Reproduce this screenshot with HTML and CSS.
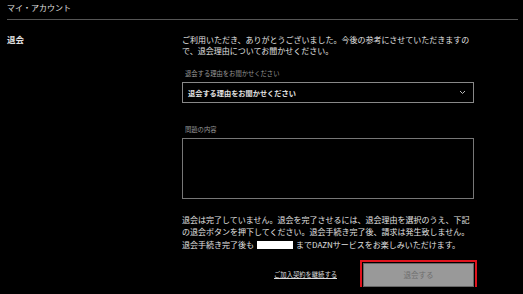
FILE: index.html
```html
<!DOCTYPE html>
<html lang="ja">
<head>
  <meta charset="UTF-8">
  <meta name="viewport" content="width=device-width, initial-scale=1.0">
  <title>マイ・アカウント</title>
  <link rel="stylesheet" href="styles.css">
</head>
<body>
  <!-- ヘッダー -->
  <div class="page-title">マイ・アカウント</div>

  <!-- 退会フォーム -->
  <div class="section">
    <div class="section-label">退会</div>
    <div class="section-body">
      <p class="intro">ご利用いただき、ありがとうございました。今後の参考にさせていただきますので、退会理由についてお聞かせください。</p>

      <div class="field-label">退会する理由をお聞かせください</div>
      <div class="select-box">
        <span>退会する理由をお聞かせください</span>
        <svg class="chevron" width="7" height="5" viewBox="0 0 7 5">
          <path d="M1 1 L3.5 3.5 L6 1" fill="none" stroke="#bbb" stroke-width="1"/>
        </svg>
      </div>

      <div class="field-label second">問題の内容</div>
      <div class="text-box"></div>

      <p class="notice">退会は完了していません。退会を完了させるには、退会理由を選択のうえ、下記の退会ボタンを押下してください。退会手続き完了後、請求は発生致しません。退会手続き完了後も<span class="masked"></span>までDAZNサービスをお楽しみいただけます。</p>

      <div class="actions">
        <a class="keep-link">ご加入契約を継続する</a>
        <button class="cancel-button">退会する</button>
      </div>
    </div>
  </div>
</body>
</html>
```

FILE: styles.css
```css
/* 全体 */
body {
  margin: 0;
  background: #000;
  color: #e0e0e0;
  font-family: "Noto Sans CJK JP", "Noto Sans", sans-serif;
}
/* ページタイトルと区切り線 */
.page-title {
  margin: 0 5px 0 7px;
  padding: 2px 0 5px;
  font-size: 8px;
  line-height: 12px;
  border-bottom: 1px solid #555;
}
/* 2カラムのセクション */
.section {
  display: flex;
  padding: 14px 0 0 7px;
}
.section-label {
  width: 175px;
  font-size: 8.5px;
  line-height: 11px;
  font-weight: bold;
}
.section-body {
  width: 292px;
}
.intro {
  margin: 0;
  font-size: 8px;
  line-height: 11px;
}
/* 入力欄のラベル */
.field-label {
  margin: 14px 0 4px 3px;
  font-size: 6.3px;
  line-height: 8px;
  color: #999;
}
.field-label.second {
  margin-top: 23px;
  margin-bottom: 4px;
}
/* セレクトボックス */
.select-box {
  display: flex;
  align-items: center;
  justify-content: space-between;
  height: 19px;
  padding: 0 7px 0 5px;
  border: 1px solid #888;
  font-size: 7.2px;
  font-weight: bold;
}
.text-box {
  height: 59px;
  border: 1px solid #777;
}
/* 注意書き */
.notice {
  margin: 15px 0 0;
  font-size: 8px;
  line-height: 12.3px;
}
.masked {
  display: inline-block;
  width: 36px;
  height: 8px;
  margin: 0 3px;
  background: #fff;
  vertical-align: -1px;
}
/* ボタン */
.actions {
  display: flex;
  align-items: center;
  justify-content: flex-end;
  gap: 26px;
  margin-top: 12px;
}
.keep-link {
  font-size: 6.3px;
  color: #ddd;
  text-decoration: underline;
}
.cancel-button {
  width: 111px;
  height: 24px;
  padding: 0;
  background: #999;
  border: 1px solid #666;
  color: #6e6e6e;
  font-family: inherit;
  font-size: 7.5px;
  outline: 2px solid #e0141e;
  outline-offset: 1px;
}
```
